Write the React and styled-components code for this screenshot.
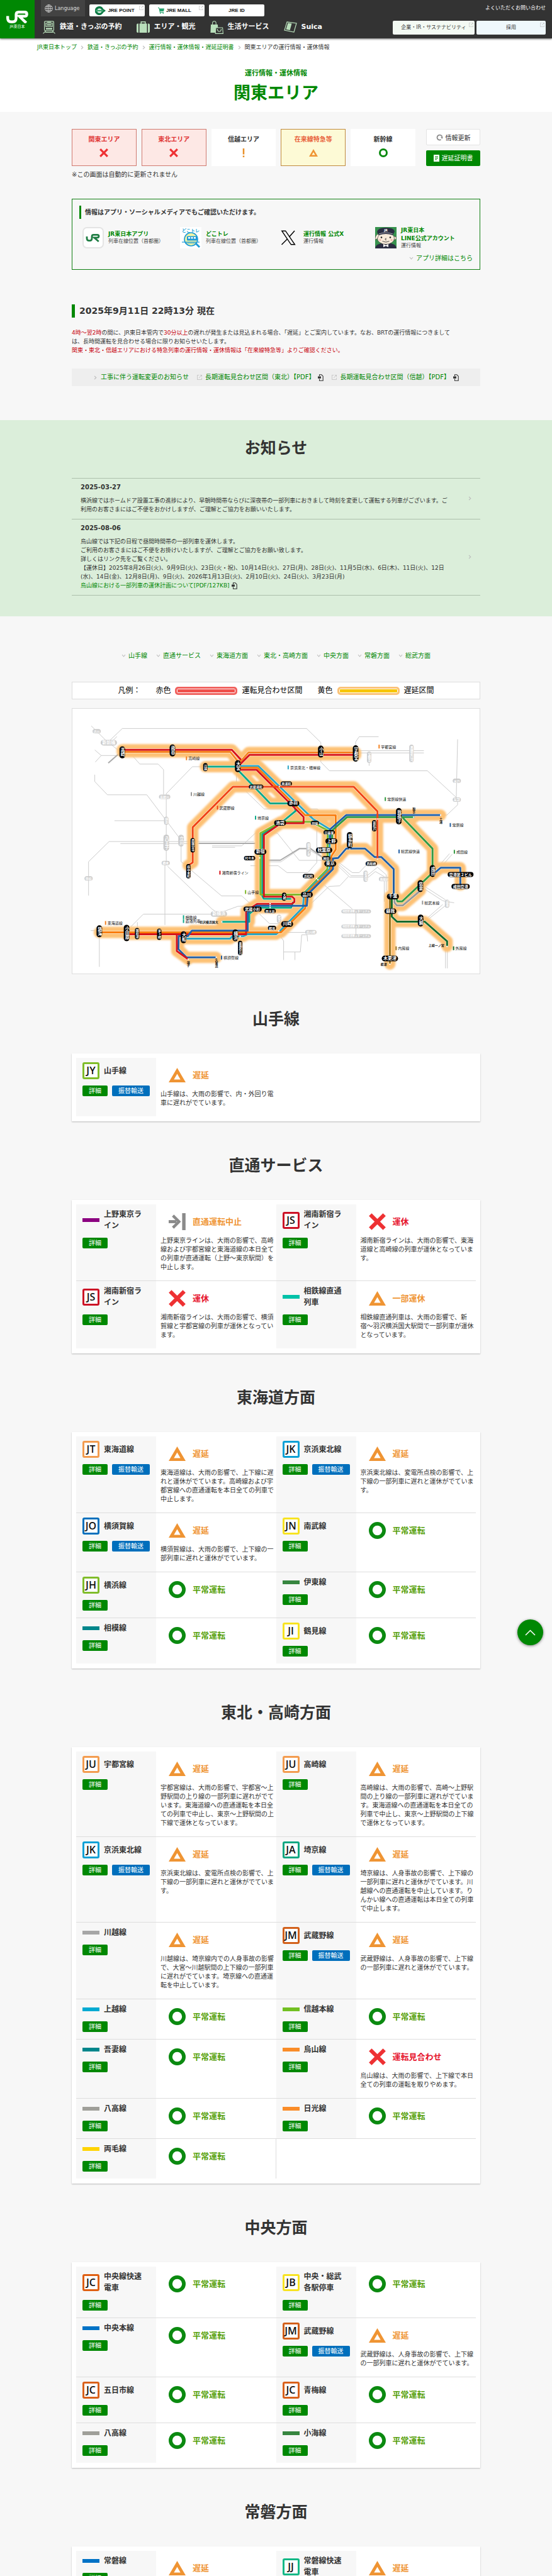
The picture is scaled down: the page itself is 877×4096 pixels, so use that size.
import React from "react";
import styled, { createGlobalStyle } from "styled-components";

const GlobalStyle = createGlobalStyle`
  * {
    box-sizing: border-box;
  }
  html {
    scrollbar-width: none;
  }
  body {
    margin: 0;
    background: #f7f7f7;
    color: #333;
    font-family: "DejaVu Sans", "Noto Sans CJK JP", sans-serif;
    font-size: 10px;
    line-height: 14px;
  }
  h1, h2, h3, p, ul, ol {
    margin: 0;
    padding: 0;
  }
  ul, ol {
    list-style: none;
  }
  a {
    color: #008803;
    text-decoration: none;
  }
  button {
    font-family: inherit;
    cursor: pointer;
  }
  svg {
    display: block;
    flex-shrink: 0;
  }
`;

const Page = styled.div`
  position: relative;
`;

const Container = styled.div`
  width: 100%;
  max-width: 649px;
  margin: 0 auto;
`;

/* ---------- header ---------- */

const HeaderBar = styled.header`
  position: relative;
  display: flex;
  height: 61px;
  background: #333;
  box-shadow: 0 1px 3px rgba(0, 0, 0, 0.6);
`;

const Logo = styled.a`
  display: flex;
  flex-direction: column;
  align-items: center;
  width: 55px;
  padding-top: 17px;
  background: #008803;
  color: #fff;
  font-size: 6px;
  line-height: 9px;
`;

const HeaderBody = styled.div`
  flex: 1;
  display: flex;
  justify-content: space-between;
  padding: 0 10px;
`;

const TopLinks = styled.div`
  display: flex;
  gap: 7px;
  height: 26px;
`;

const Language = styled.button`
  display: flex;
  align-items: center;
  gap: 3px;
  width: 70px;
  height: 26px;
  padding: 0 6px;
  border: 0;
  background: #434343;
  color: #ddd;
  font-size: 8px;
`;

const BrandLink = styled.a`
  position: relative;
  display: flex;
  align-items: center;
  justify-content: center;
  gap: 3px;
  width: 88px;
  height: 19px;
  margin-top: 7px;
  padding-right: ${({ $ext }) => ($ext ? "7px" : "0")};
  border-radius: 2px;
  background: #fff;
  color: #111;
  font-family: "Liberation Sans", sans-serif;
  font-size: 8px;
  font-weight: 700;
`;

const Corner = styled.span`
  position: absolute;
  top: ${({ $top }) => $top || 2}px;
  right: 2px;
`;

const GlobalNav = styled.nav`
  display: flex;
  gap: 23px;
  margin-top: 6px;
  padding-left: 3px;
`;

const NavItem = styled.a`
  display: flex;
  align-items: center;
  gap: 7px;
  color: #fff;
  font-size: 11px;
  font-weight: 700;
  line-height: 22px;
`;

const HeaderRight = styled.div`
  display: flex;
  flex-direction: column;
  align-items: flex-end;
  padding-top: 6px;
`;

const SmallLink = styled.a`
  color: #fff;
  font-size: 8px;
  line-height: 14px;
`;

const CorpLinks = styled.div`
  display: flex;
  gap: 3px;
  margin-top: 13px;
`;

const CorpLink = styled.a`
  position: relative;
  width: ${({ $w }) => $w}px;
  border-radius: 2px;
  background: ${({ $bg }) => $bg};
  color: #333;
  font-size: 8px;
  line-height: 22px;
  text-align: center;
`;

/* ---------- hero ---------- */

const Hero = styled.div`
  padding: 8px 0 12px;
  background: #fff;
  text-align: center;
`;

const Breadcrumb = styled.ol`
  display: flex;
  gap: 5px;
  padding-left: 59px;
  font-size: 9px;
  line-height: 13px;

  li {
    display: flex;
    align-items: center;
    gap: 5px;
  }
`;

const HeroSub = styled.p`
  margin-top: 27px;
  color: #008803;
  font-size: 11px;
  font-weight: 700;
  line-height: 16px;
`;

const HeroTitle = styled.h1`
  margin-top: 5px;
  color: #008803;
  font-size: 27px;
  line-height: 36px;
`;

/* ---------- area tabs ---------- */

const TabRow = styled.div`
  display: flex;
  gap: 17px;
  margin-top: 27px;
`;

const Tabs = styled.nav`
  flex: 1;
  display: grid;
  grid-template-columns: repeat(5, 1fr);
  gap: 8px;
`;

const tabColors = {
  stop: "background: #fde8e5; border-color: #d07a70; color: #e03232;",
  delay: "background: #fdfad6; border-color: #c08a3e; color: #e8603a;",
  plain: "background: #fff; border-color: #fff; color: #333;",
};

const Tab = styled.a`
  display: flex;
  flex-direction: column;
  align-items: center;
  gap: 7px;
  height: 59px;
  padding-top: 9px;
  border: 1px solid;
  font-size: 10px;
  font-weight: 700;
  ${({ $kind }) => tabColors[$kind]}
`;

const TabActions = styled.div`
  display: flex;
  flex-direction: column;
  justify-content: space-between;
  width: 86px;
`;

const RefreshButton = styled.button`
  display: flex;
  align-items: center;
  justify-content: center;
  gap: 4px;
  height: 26px;
  padding: 0;
  border: 1px solid #e3e3e3;
  border-radius: 2px;
  background: #fff;
  color: #333;
  font-size: 10px;
`;

const CertLink = styled.a`
  display: flex;
  align-items: center;
  justify-content: center;
  gap: 4px;
  height: 25px;
  border-radius: 2px;
  background: #008803;
  color: #fff;
`;

const TabNote = styled.p`
  margin-top: 6px;
  line-height: 15px;
`;

/* ---------- app box ---------- */

const AppBox = styled.section`
  margin-top: 31px;
  padding: 10px 11px;
  border: 1px solid #0f7f12;
`;

const BarHeading = styled.h2`
  padding-left: ${({ $wide }) => ($wide ? 7 : 6)}px;
  border-left: ${({ $wide }) => ($wide ? 5 : 3)}px solid #008803;
  font-size: ${({ $wide }) => ($wide ? 14 : 10)}px;
  line-height: 21px;
`;

const AppList = styled.ul`
  display: grid;
  grid-template-columns: repeat(4, 1fr);
  margin-top: 12px;
  padding-left: 5px;
`;

const AppItem = styled.li`
  display: flex;
  align-items: center;
  gap: 7px;
  height: 35px;
  white-space: nowrap;

  a {
    display: block;
    font-size: 9px;
    font-weight: 700;
    line-height: 13px;
  }
  p {
    color: #444;
    font-size: 8px;
    line-height: 10px;
  }
`;

const MoreLink = styled.a`
  display: flex;
  align-items: center;
  justify-content: flex-end;
  gap: 4px;
  margin-top: 8px;
  line-height: 15px;
`;

/* ---------- status time ---------- */

const TimeSection = styled.section`
  margin-top: 55px;
`;

const Lead = styled.p`
  margin-top: 17px;
  font-size: 9px;
`;

const Red = styled.span`
  color: #c7000b;
`;

const LinkStrip = styled.div`
  display: flex;
  align-items: center;
  justify-content: center;
  gap: 13px;
  height: 28px;
  margin-top: 22px;
  background: #eee;

  a {
    display: flex;
    align-items: center;
    gap: 5px;
  }
`;

/* ---------- notice ---------- */

const Notice = styled.section`
  margin-top: 54px;
  padding: 26px 0 33px;
  background: #dbeeda;
`;

const SectionTitle = styled.h2`
  font-size: 25px;
  line-height: 38px;
  text-align: center;
`;

const NoticeList = styled.ul`
  margin-top: 28px;
  border-bottom: 1px solid #adc0ac;
`;

const NoticeItem = styled.li`
  display: flex;
  align-items: center;
  justify-content: space-between;
  padding: 7px 13px 8px 14px;
  border-top: 1px solid #adc0ac;
  font-size: 9px;

  strong {
    display: block;
    margin-bottom: 7px;
    font-size: 10px;
  }
`;

const InlineIcon = styled.span`
  display: inline-block;
  margin-left: 3px;
  vertical-align: middle;
`;

/* ---------- anchors, legend, map ---------- */

const Anchors = styled.nav`
  display: flex;
  justify-content: center;
  gap: 14px;
  margin-top: 55px;
  line-height: 15px;

  a {
    display: flex;
    align-items: center;
    gap: 4px;
  }
`;

const Legend = styled.div`
  display: flex;
  align-items: center;
  justify-content: center;
  height: 28px;
  margin-top: 34px;
  border: 1px solid #ddd;
  background: #fff;
  color: #000;
  font-size: 12px;

  span + span {
    margin-left: 24px;
  }
`;

const LegendKey = styled.span`
  display: flex;
  align-items: center;
  gap: 7px;

  i {
    width: 99px;
    height: 13px;
    border: 3px solid ${({ $edge }) => $edge};
    border-radius: 5px;
    background: ${({ $line }) => $line};
    box-shadow: inset 0 0 0 1px #fff;
  }
`;

const MapFrame = styled.div`
  margin-top: 14px;
  margin-bottom: 53px;
  border: 1px solid #ddd;
  background: #fff;

  svg {
    width: 100%;
    height: auto;
  }
`;

/* ---------- line status ---------- */

const LineSection = styled.section`
  margin-bottom: 52px;
`;

const LineCard = styled.ul`
  display: grid;
  grid-template-columns: 1fr 1fr;
  margin-top: 35px;
  padding: 7px;
  background: #fff;
  box-shadow: 0 1px 2px rgba(0, 0, 0, 0.25);
`;

const LineRow = styled.li`
  display: grid;
  grid-template-columns: 2fr 3fr;
  border-bottom: 1px solid ${({ $last }) => ($last ? "transparent" : "#ddd")};
  ${({ $alone }) => $alone && "box-shadow: inset -1px 0 #ddd;"}
`;

const LineSide = styled.div`
  padding: 7px 0 11px 10px;
  background: #f7f7f7;
`;

const LineHead = styled.div`
  display: flex;
  align-items: center;
  gap: 7px;
  padding-right: 18px;
`;

const LineName = styled.h3`
  font-size: 12px;
  line-height: 18px;
`;

const Badge = styled.span`
  display: flex;
  flex-shrink: 0;
  align-items: center;
  justify-content: center;
  width: 27px;
  height: 27px;
  border: 3px solid ${({ $color }) => $color};
  border-radius: 3px;
  background: #fff;
  color: #111;
  font-family: "Open Sans", sans-serif;
  font-size: 16px;
  font-weight: 600;
  line-height: 21px;
`;

const ColorBar = styled.span`
  flex-shrink: 0;
  width: 27px;
  height: 6px;
  background: ${({ $color }) => $color};
`;

const Buttons = styled.div`
  display: flex;
  gap: 7px;
  margin-top: 10px;
`;

const Pill = styled.a`
  padding: 0 10px;
  border-radius: 2px;
  background: ${({ $alt }) => ($alt ? "#006fbc" : "#008803")};
  color: #fff;
  line-height: 17px;
`;

const LineBody = styled.div`
  padding: 14px 2px 14px 7px;
`;

const StatusHead = styled.div`
  display: flex;
  align-items: center;
  gap: 11px;
  padding-left: 13px;
  color: ${({ $color }) => $color};
  font-size: 13px;
  font-weight: 700;
  line-height: 27px;
`;

const Detail = styled.p`
  margin-top: 10px;
`;

const ToTop = styled.button`
  position: absolute;
  top: 2575px;
  right: 14px;
  display: flex;
  align-items: center;
  justify-content: center;
  width: 41px;
  height: 41px;
  border: 0;
  border-radius: 50%;
  background: #008803;
  box-shadow: 0 1px 4px rgba(0, 0, 0, 0.5);
`;

/* ---------- icons ---------- */

const Chevron = ({ dir = "right", color = "#bbb" }) => (
  <svg width="7" height="7" viewBox="0 0 7 7" fill="none" stroke={color} strokeWidth="1.1">
    <path d={dir === "down" ? "M1 2 L3.5 5 L6 2" : "M2 0.8 L4.8 3.5 L2 6.2"} />
  </svg>
);

const External = ({ size = 8 }) => (
  <svg width={size} height={size} viewBox="0 0 10 10" fill="none" stroke="#bbb" strokeWidth="1">
    <path d="M4 0.5 H0.5 V9.5 H9.5 V6 M6 0.5 H9.5 V4 M9.5 0.5 L4 6" />
  </svg>
);

const PdfIcon = () => (
  <svg width="9" height="11" viewBox="0 0 9 11" fill="none" stroke="#333" strokeWidth="1.1">
    <path d="M2.5 3 V0.8 H5.8 L8.2 3.2 V10.2 H2.5 V7.6" />
    <path d="M0.6 4 H4.4 V6.2 H0.6 Z" fill="#333" />
  </svg>
);

const statusIcons = {
  ok: (
    <circle cx="14" cy="14" r="11" fill="none" stroke="#0b8a10" strokeWidth="6" />
  ),
  delay: (
    <path fillRule="evenodd" fill="#ef9433" d="M14 2 L28 26 H0 Z M14 12 L8.6 21.2 H19.4 Z" />
  ),
  stop: <path stroke="#ee3133" strokeWidth="6.4" d="M2.4 2.4 L25.6 25.6 M25.6 2.4 L2.4 25.6" />,
  through: (
    <g fill="none" stroke="#8a8a8a">
      <path strokeWidth="5" d="M0 14 H13" />
      <path strokeWidth="4.6" d="M7 4 L17 14 L7 24" />
      <path strokeWidth="5.6" d="M25 0 V28" />
    </g>
  ),
  info: <path stroke="#e8902a" strokeWidth="5" d="M14 0 V19 M14 23 V28" />,
};

const StatusIcon = ({ kind, size = 27 }) => (
  <svg width={size} height={size} viewBox="0 0 28 28">
    {statusIcons[kind]}
  </svg>
);

const JrMark = ({ width, color }) => (
  <svg width={width} height={(width * 20) / 35} viewBox="0 0 35 20" fill="none" stroke={color} strokeWidth="4.4">
    <path d="M2.2 8.5 V12 Q2.2 17.7 8 17.7 H10 Q15.6 17.7 15.6 12 V6 Q15.6 2.2 19.6 2.2 H29 Q32.6 2.2 32.6 5.4 Q32.6 8.8 29 8.8 H20.6 L31.6 19.4" />
  </svg>
);

const GlobeIcon = () => (
  <svg width="13" height="13" viewBox="0 0 14 14" fill="none" stroke="#ddd" strokeWidth="0.8">
    <circle cx="7" cy="7" r="6.3" />
    <ellipse cx="7" cy="7" rx="3" ry="6.3" />
    <path d="M7 0.7 V13.3 M0.7 7 H13.3 M1.6 3.8 H12.4 M1.6 10.2 H12.4" />
  </svg>
);

const PointIcon = () => (
  <svg width="17" height="14" viewBox="0 0 17 14">
    <path fill="#0d7a45" d="M7 0 A7 7 0 0 1 13 4 L17 7 L13 10 A7 7 0 1 1 7 0 Z" />
    <circle cx="7" cy="7" r="3.6" fill="#fff" />
    <path fill="#3ea56f" d="M1 5.6 H13 V8.4 H1 Z" />
  </svg>
);

const CartIcon = () => (
  <svg width="10" height="10" viewBox="0 0 10 10">
    <path fill="#22a06b" d="M0 0 H2 L2.4 1.4 H10 L9 6 H3.4 L3.6 7 H9 V8 H2.8 L1.4 1 H0 Z" />
    <circle cx="3.8" cy="9.1" r="0.9" fill="#22a06b" />
    <circle cx="8.2" cy="9.1" r="0.9" fill="#22a06b" />
  </svg>
);

const TrainIcon = () => (
  <svg width="20" height="21" viewBox="0 0 20 21" fill="none" stroke="#b9dfbb" strokeWidth="1.2">
    <rect x="2.6" y="0.8" width="14.8" height="15" rx="1.5" />
    <rect x="4.8" y="3.8" width="10.4" height="5.4" />
    <path d="M7 2.2 H13" />
    <path fill="#b9dfbb" d="M5 11.5 H15 V14 H5 Z M6.4 5.4 H13.6 V7.6 H6.4 Z" stroke="none" />
    <path d="M5 16 L0.5 20.4 M15 16 L19.5 20.4 M4 18.4 H16" />
  </svg>
);

const CaseIcon = () => (
  <svg width="21" height="18" viewBox="0 0 21 18" fill="#b9dfbb">
    <path d="M2 3.5 H3 V18 H2 Q0 18 0 16 V5.5 Q0 3.5 2 3.5 Z M19 3.5 H18 V18 H19 Q21 18 21 16 V5.5 Q21 3.5 19 3.5 Z" />
    <path d="M4.5 3.5 H6.5 V0 H14.5 V3.5 H16.5 V18 H4.5 Z M8 1.4 V3.5 H13 V1.4 Z" fillRule="evenodd" />
  </svg>
);

const BagIcon = () => (
  <svg width="21" height="21" viewBox="0 0 21 21" fill="none" stroke="#b9dfbb" strokeWidth="1.1">
    <path d="M1 6 H12 L12.6 19 H0.4 Z" fill="#b9dfbb" stroke="none" />
    <path d="M3.6 7.5 V4 Q3.6 0.8 6.4 0.8 Q9.2 0.8 9.2 4 V7.5" />
    <path d="M9 11 H19.6 L20.4 20.4 H8.2 Z" fill="#333" />
    <path d="M11.4 13 Q11.4 17 14.4 17 Q17.4 17 17.4 13" />
  </svg>
);

const SuicaIcon = () => (
  <svg width="21" height="18" viewBox="0 0 21 18" fill="none" stroke="#b9dfbb" strokeWidth="1.2">
    <path d="M5 0.8 L20 3 L16 17 L1 14 Z" />
    <path fill="#b9dfbb" d="M6.5 2.6 L12.5 3.4 L9.6 14 L3.4 12.8 Z" stroke="none" />
  </svg>
);

const ReloadIcon = () => (
  <svg width="11" height="11" viewBox="0 0 11 11" fill="none" stroke="#8c8c8c" strokeWidth="1.8">
    <path d="M7.6 9 A4 4 0 1 1 9.4 4.6" />
    <path d="M7 4.8 H11 L9.4 8 Z" fill="#8c8c8c" stroke="none" />
  </svg>
);

const DocIcon = () => (
  <svg width="9" height="11" viewBox="0 0 9 11">
    <rect width="9" height="11" fill="#fff" />
    <path d="M2 3 H7 M2 5.4 H7 M2 7.8 H5" stroke="#008803" />
  </svg>
);

const JrAppIcon = () => (
  <svg width="34" height="34" viewBox="0 0 34 34">
    <rect x="1" y="1" width="32" height="32" rx="6" fill="#fff" stroke="#e4e4e4" strokeWidth="2" />
    <g fill="none" stroke="#1f7d43" strokeWidth="2.8">
      <path d="M7 15 V18 Q7 21.6 10.6 21.6 H11.6 Q15 21.6 15 18 V15 Q15 12.4 17.6 12.4 H23.6 Q26 12.4 26 14.6 Q26 16.8 23.6 16.8 H18.6 L25.8 23" />
    </g>
  </svg>
);

const DokotoreIcon = () => (
  <svg width="34" height="34" viewBox="0 0 34 34">
    <rect width="34" height="34" fill="#fff" />
    <path d="M25 26 L31 32" stroke="#1e9bd7" strokeWidth="3" />
    <circle cx="17.5" cy="19.5" r="10.5" fill="#eef3a6" stroke="#1e9bd7" strokeWidth="1.6" />
    <rect x="11" y="14.5" width="17" height="7" rx="1" fill="#1e9bd7" />
    <path d="M13 16 H16 V18.5 H13 Z M17.5 16 H20.5 V18.5 H17.5 Z M22 16 H25 V18.5 H22 Z" fill="#fff" />
    <path d="M3 24 H31" stroke="#1e9bd7" strokeWidth="1.2" />
    <path d="M8 25.5 H27" stroke="#1e9bd7" strokeWidth="1.6" strokeDasharray="1.5 1" />
    <text x="17" y="8" textAnchor="middle" fontSize="7" fontWeight="700" fill="#2aa7d8">どこトレ</text>
  </svg>
);

const XIcon = () => (
  <svg width="34" height="34" viewBox="0 0 34 34" fill="none" stroke="#000">
    <path strokeWidth="1.5" d="M27 6 L18.5 15.7 M15.5 19 L6.5 28" />
    <path strokeWidth="1.4" d="M6.8 6.2 H12.6 L27.4 27.8 H21.4 Z" fill="#f7f7f7" />
  </svg>
);

const OfficerIcon = () => (
  <svg width="34" height="34" viewBox="0 0 34 34">
    <rect width="34" height="34" fill="#37924e" />
    <path d="M0 34 Q1 27 10 26 H25 Q33 27 34 34 Z" fill="#2b2d42" />
    <circle cx="31" cy="17.5" r="2.6" fill="#f7e6d4" stroke="#222" strokeWidth="0.5" />
    <ellipse cx="17" cy="18" rx="13.5" ry="9.5" fill="#f9ecdc" stroke="#222" strokeWidth="0.6" />
    <path d="M0 20 Q0 13 5 11 L6 13 L3 19 Z" fill="#f9ecdc" stroke="#222" strokeWidth="0.5" />
    <path d="M3 8 Q4 1 17 1 Q30 1 31 7 L28 13 Q17 9 6 13 Z" fill="#2b2d42" />
    <path d="M6 11 Q17 7 28 11" stroke="#ddd" strokeWidth="0.7" fill="none" />
    <text x="17" y="6.5" textAnchor="middle" fontSize="5" fontWeight="700" fill="#fff">JR</text>
    <circle cx="10" cy="16.5" r="1.3" fill="#222" />
    <circle cx="24" cy="16.5" r="1.3" fill="#222" />
    <circle cx="8" cy="20.5" r="1.6" fill="#f3b8ac" />
    <circle cx="26" cy="20.5" r="1.6" fill="#f3b8ac" />
    <path d="M18 18 Q15.5 18 16 20 Q16.5 21 18 20.5 M11.5 22.5 Q17 25.5 22.5 22.5" fill="none" stroke="#222" strokeWidth="0.8" />
    <path d="M13 27 L17 29 L21 27 V32 L17 30 L13 32 Z" fill="#fff" />
  </svg>
);

/* ---------- route map ---------- */

// Tracks and stations share one grid, which is wider than it is tall.
const SX = 0.4286;
const SY = 0.2961;
const px = (x) => (x - 27) * SX;
const py = (y) => (y - 44) * SY;

const greyTracks = [
  "97,136 152,215 200,270",
  "165,215 212,150 895,150 948,225 948,330 980,377 1343,377 1450,520 1455,208",
  "170,225 192,193",
  "1455,540 1455,560 1415,615 1400,615",
  "1077,240 1077,222 1090,194 1162,194",
  "1085,269 1330,269",
  "1085,281 1330,281",
  "1127,290 1127,350",
  "110,265 134,295 205,295",
  "134,295 112,330",
  "252,300 277,341 345,341 365,371 365,505",
  "515,355 472,355 375,500 375,860 370,870 370,1205",
  "110,398 110,435 157,506 303,506 430,750 430,865 580,1049 655,1049 690,1095",
  "183,645 370,645",
  "87,1047 87,865 163,757 700,757",
  "205,768 700,768",
  "380,890 545,1120 570,1145",
  "545,780 655,780 705,712 787,712 868,858 955,858",
  "545,788 630,788",
  "635,370 635,440",
  "670,487 738,582 935,582 942,592",
  "687,887 790,887 823,924 900,924 933,870 933,690",
  "748,866 800,866 870,797 900,797 960,850",
  "1015,870 1065,924 1090,924 1125,870",
  "1015,880 1060,940 1120,940 1158,895 1190,935 1190,1020",
  "1010,885 1055,948 1125,948 1150,918 1183,945 1183,1080",
  "962,992 1065,1120",
  "1078,1130 1078,1265",
  "1050,945 1018,995 978,998 912,1090",
  "1435,825 1405,875",
  "1425,822 1395,872",
  "1325,1005 1400,1075 1442,1086",
  "1335,1000 1410,1070",
  "1415,1095 1350,1170",
  "1400,1095 1345,1165",
  "1410,1330 1410,1438",
  "1417,1330 1417,1438",
  "127,1260 127,1430",
  "95,1235 120,1235",
  "240,1220 290,1147 560,1147 640,1105 700,1102",
  "268,1190 268,1230",
  "720,1145 758,1198 800,1198",
  "800,1270 810,1290 810,1393",
  "810,1350 872,1350 877,1258 897,1258 899,1293",
  "852,1350 852,1393",
  "825,1245 890,1245",
];

const heavyTracks = ["200,285 160,335", "495,767 705,767", "748,857 798,857 868,795 910,795 955,842"];

const tracks = [
  ["#f58220", "212,275 612,275 645,335"],
  ["#d7141a", "212,264 618,264 652,318 640,345"],
  ["#f58220", "1077,279 680,279 645,335"],
  ["#d7141a", "1077,291 684,291 640,355"],
  ["#0fa98a", "520,355 640,355"],
  ["#0fa98a", "640,372 760,552 845,552 855,592 808,648 731,717 731,1050 736,1064 838,1065"],
  ["#0fa98a", "846,1080 838,1112 710,1112 683,1145 683,1188 580,1188"],
  ["#7fb82a", "800,651 912,651 973,697 972,905 880,1042 724,1042 724,712 800,651"],
  ["#2ca6c4", "640,351 716,351 920,637 980,690 981,905 885,1040 882,1110 795,1240 782,1255 675,1255 660,1266 620,1266 612,1278 445,1278"],
  ["#f97c0c", "640,361 713,361 890,616 1003,616 1003,800 987,835 987,905 892,1040 890,1115 800,1245 127,1245"],
  ["#d7141a", "640,372 710,372 884,625 884,659 800,659 737,722 737,1053 842,1053 850,1065 850,1082 840,1092 712,1092 671,1130 671,1255 228,1255"],
  ["#2360a5", "1218,1050 1218,905 1172,840 1147,840 1112,795 1042,795 1012,845 993,848 993,905 900,1040 896,1102 710,1102 677,1140 677,1235 470,1235 455,1265 421,1265 420,1335 450,1379 560,1379"],
  ["#d7141a", "414,1255 414,1345 456,1389"],
  ["#339a42", "1295,626 1045,626 990,697 990,750"],
  ["#2360a5", "1392,615 1042,615 983,690 983,750"],
  ["#339a42", "1252,630 1362,795 1362,925 1250,1078 1232,1078 1225,1050"],
  ["#999", "1317,1020 1252,1100 1230,1100 1221,1085 1221,1050"],
  ["#2360a5", "1362,935 1392,898 1465,898 1465,990"],
  ["#f04414", "456,885 473,870 473,680 622,463 1070,463 1158,595 1158,850"],
  ["#9a7420", "1204,1050 1204,1415"],
  ["#166b2c", "1211,1050 1211,1160 1230,1187 1333,1187 1416,1292 1416,1320"],
];

// name, x, y, kind: H and V are major stations, h and v minor ones
const stations = [
  ["高崎", 212, 278, "V"], ["熊谷", 398, 268, "V"], ["小山", 948, 274, "V"], ["宇都宮", 1077, 284, "V"],
  ["川越", 520, 357, "v"], ["大宮", 640, 352, "V"], ["南浦和", 820, 446, "h"], ["武蔵浦和", 708, 463, "h"],
  ["赤羽", 846, 552, "H"], ["池袋", 797, 657, "H"], ["田端", 926, 657, "h"], ["日暮里", 979, 708, "h"],
  ["上野", 987, 755, "H"], ["秋葉原", 960, 803, "H"], ["神田", 968, 847, "h"], ["東京", 983, 876, "H"],
  ["錦糸町", 1055, 750, "V"], ["新松戸", 1146, 672, "v"], ["我孫子", 1237, 621, "V"], ["西船橋", 1135, 876, "h"],
  ["新宿", 724, 812, "H"], ["代々木", 684, 846, "h"], ["浜松町", 902, 942, "h"], ["品川", 896, 1042, "H"],
  ["大崎", 812, 1053, "v"], ["武蔵小杉", 695, 1120, "H"], ["西大井", 760, 1130, "h"], ["川崎", 823, 1200, "H"],
  ["鶴見", 767, 1221, "h"], ["横浜", 631, 1261, "V"], ["東神奈川", 649, 1328, "v"], ["大船", 439, 1271, "V"],
  ["茅ヶ崎", 349, 1255, "v"], ["国府津", 267, 1251, "v"], ["小田原", 228, 1248, "V"], ["熱海", 127, 1239, "V"],
  ["西国分寺", 473, 777, "v"], ["府中本町", 457, 916, "v"], ["成田", 1362, 915, "V"], ["佐倉", 1317, 996, "V"],
  ["空港第２ビル", 1466, 934, "H"], ["成田空港", 1466, 998, "H"], ["千葉", 1215, 1052, "H"], ["蘇我", 1206, 1131, "H"],
  ["大網", 1318, 1181, "V"], ["木更津", 1204, 1385, "H"],
];

const greyStations = [
  ["渋川", 117, 165, "h"], ["新前橋", 162, 226, "H"], ["宝積寺", 1127, 304, "v"], ["黒磯新白河", 1284, 284, "v"],
  ["水戸", 1452, 431, "h"], ["友部", 1452, 532, "h"], ["高麗川", 369, 517, "h"], ["拝島", 375, 645, "v"],
  ["八王子", 375, 763, "V"], ["立川", 430, 752, "V"], ["橋本", 373, 872, "h"], ["甲府", 87, 955, "h"],
  ["新横浜", 570, 1146, "H"], ["御茶ノ水", 902, 799, "v"], ["新木場", 1114, 943, "v"], ["南船橋", 1184, 958, "h"],
  ["成東", 1416, 1091, "v"], ["尻手", 793, 1172, "v"], ["浜川崎", 911, 1244, "h"],
  ["羽田空港第１ターミナル", 1079, 1132, "h"], ["羽田空港第３ターミナル", 1079, 1213, "h"], ["羽田空港第２ターミナル", 1079, 1265, "h"],
];

const lineLabels = [
  ["宇都宮線", 1164, 247, "#f58220"], ["高崎線", 450, 310, "#f58220"], ["京浜東北・根岸線", 827, 359, "#2ca6c4"],
  ["川越線", 468, 502, "#999"], ["武蔵野線", 565, 575, "#f04414"], ["埼京線", 706, 629, "#0fa98a"],
  ["常磐線快速", 1187, 529, "#339a42"], ["常磐線", 1428, 668, "#2360a5"], ["総武線快速", 1238, 810, "#2360a5"],
  ["成田線", 1443, 812, "#339a42"], ["湘南新宿ライン", 574, 924, "#d7141a"], ["山手線", 669, 1028, "#7fb82a"],
  ["総武本線", 1325, 1085, "#999"], ["相鉄線", 439, 1163, "#0fa98a"], ["直通列車", 439, 1184, "#0fa98a"],
  ["東海道線", 150, 1194, "#f58220"], ["横須賀線", 580, 1380, "#2360a5"], ["内房線", 1227, 1330, "#9a7420"],
  ["外房線", 1440, 1330, "#166b2c"],
];

const plainLabels = [
  ["羽沢横浜国大", 533, 1189], ["逗子", 456, 1413, "v"], ["久里浜", 560, 1410, "v"], ["取手", 1292, 590, "v"],
  ["土浦", 1392, 643, "v"], ["上総一ノ宮", 1376, 1314], ["君津", 1181, 1415],
];

const stops = [
  [794, 462], [1392, 615], [1292, 626], [1158, 636], [1158, 850], [1055, 795], [721, 845], [932, 955], [937, 962],
  [760, 1091], [760, 1102], [760, 1112], [581, 1188], [792, 1238], [649, 1266], [456, 1389], [560, 1379],
  [1204, 1415], [1416, 1320],
];

const Station = ({ name, x, y, kind, fill }) => {
  const major = kind === "H" || kind === "V";
  const vertical = kind === "V" || kind === "v";
  const font = major ? (name.length > 3 ? 6 : 7) : name.length > 6 ? 4 : 5;
  const long = name.length * font + (major ? 5 : 3);
  const thick = font + 2;
  const w = vertical ? thick : long;
  const h = vertical ? long : thick;
  return (
    <g>
      <rect x={px(x) - w / 2} y={py(y) - h / 2} width={w} height={h} rx={thick / 2} fill={fill} />
      <text
        x={px(x)}
        y={py(y)}
        fill="#fff"
        fontSize={font}
        fontWeight="700"
        textAnchor="middle"
        dominantBaseline="central"
        writingMode={vertical ? "vertical-rl" : undefined}
      >
        {name}
      </text>
    </g>
  );
};

const Track = ({ points, color, width }) => (
  <polyline points={points} stroke={color} strokeWidth={width} vectorEffect="non-scaling-stroke" />
);

const RouteMap = () => (
  <svg viewBox="0 0 647 421" role="img" aria-label="関東エリア路線図">
    <defs>
      <filter id="glow" x="-5%" y="-5%" width="110%" height="110%">
        <feGaussianBlur stdDeviation="1.6" />
      </filter>
    </defs>
    <g fill="none" strokeLinejoin="round">
      <g transform={`scale(${SX} ${SY}) translate(-27 -44)`}>
        {greyTracks.map((p) => <Track key={p} points={p} color="#ccc" width="1" />)}
        {heavyTracks.map((p) => <Track key={p} points={p} color="#aaa" width="2" />)}
      </g>
    </g>
    {greyStations.map(([name, x, y, kind]) => (
      <Station key={name} name={name} x={x} y={y} kind={kind} fill="#ccc" />
    ))}
    <g filter="url(#glow)" fill="none" strokeLinejoin="round" strokeLinecap="round">
      <g transform={`scale(${SX} ${SY}) translate(-27 -44)`}>
        {tracks.map(([c, p]) => <Track key={p} points={p} color="#fdc174" width="18" />)}
      </g>
    </g>
    <g fill="none" strokeLinejoin="round">
      <g transform={`scale(${SX} ${SY}) translate(-27 -44)`}>
        {tracks.map(([c, p]) => <Track key={p} points={p} color="#fff" width="4" />)}
        {tracks.map(([c, p]) => <Track key={p} points={p} color={c} width="3" />)}
      </g>
    </g>
    {stops.map(([x, y]) => (
      <rect key={`${x}-${y}`} x={px(x) - 1} y={py(y) - 1} width="2" height="2" fill="#fff" />
    ))}
    {stations.map(([name, x, y, kind]) => (
      <Station key={name} name={name} x={x} y={y} kind={kind} fill="#000" />
    ))}
    {lineLabels.map(([name, x, y, color]) => (
      <g key={name}>
        <rect x={px(x) - 1} y={py(y) - 3} width="2" height="6" fill={color} />
        <text x={px(x) + 3} y={py(y)} fontSize="6" fill="#111" dominantBaseline="central">{name}</text>
      </g>
    ))}
    {plainLabels.map(([name, x, y, v]) => (
      <text
        key={name}
        x={px(x)}
        y={py(y)}
        fontSize="5"
        fontWeight="700"
        fill="#111"
        textAnchor="middle"
        dominantBaseline="central"
        writingMode={v ? "vertical-rl" : undefined}
      >
        {name}
      </text>
    ))}
  </svg>
);

/* ---------- data ---------- */

const DELAY = { kind: "delay", label: "遅延", color: "#ef9433" };
const PARTIAL = { kind: "delay", label: "一部運休", color: "#ef9433" };
const THROUGH = { kind: "through", label: "直通運転中止", color: "#ef9433" };
const CANCEL = { kind: "stop", label: "運休", color: "#e6142d" };
const HALT = { kind: "stop", label: "運転見合わせ", color: "#e6142d" };
const NORMAL = { kind: "ok", label: "平常運転", color: "#56a00b" };

const areas = [
  {
    title: "山手線",
    lines: [
      { name: "山手線", code: "JY", color: "#80bd2a", alt: true, status: DELAY, text: "山手線は、大雨の影響で、内・外回り電車に遅れがでています。" },
    ],
  },
  {
    title: "直通サービス",
    lines: [
      { name: "上野東京ライン", color: "#8b0080", status: THROUGH, text: "上野東京ラインは、大雨の影響で、高崎線および宇都宮線と東海道線の本日全ての列車が直通運転（上野〜東京駅間）を中止します。" },
      { name: "湘南新宿ライン", code: "JS", color: "#cc1126", status: CANCEL, text: "湘南新宿ラインは、大雨の影響で、東海道線と高崎線の列車が運休となっています。" },
      { name: "湘南新宿ライン", code: "JS", color: "#cc1126", status: CANCEL, text: "湘南新宿ラインは、大雨の影響で、横須賀線と宇都宮線の列車が運休となっています。" },
      { name: "相鉄線直通列車", color: "#00c2a8", status: PARTIAL, text: "相鉄線直通列車は、大雨の影響で、新宿〜羽沢横浜国大駅間で一部列車が運休となっています。" },
    ],
  },
  {
    title: "東海道方面",
    lines: [
      { name: "東海道線", code: "JT", color: "#f39c4f", alt: true, status: DELAY, text: "東海道線は、大雨の影響で、上下線に遅れと運休がでています。高崎線および宇都宮線への直通運転を本日全ての列車で中止します。" },
      { name: "京浜東北線", code: "JK", color: "#0ba1d6", alt: true, status: DELAY, text: "京浜東北線は、変電所点検の影響で、上下線の一部列車に遅れと運休がでています。" },
      { name: "横須賀線", code: "JO", color: "#0070bd", alt: true, status: DELAY, text: "横須賀線は、大雨の影響で、上下線の一部列車に遅れと運休がでています。" },
      { name: "南武線", code: "JN", color: "#f7e321", status: NORMAL },
      { name: "横浜線", code: "JH", color: "#80bd2a", status: NORMAL },
      { name: "伊東線", color: "#378640", status: NORMAL },
      { name: "相模線", color: "#00868b", status: NORMAL },
      { name: "鶴見線", code: "JI", color: "#f7e321", status: NORMAL },
    ],
  },
  {
    title: "東北・高崎方面",
    lines: [
      { name: "宇都宮線", code: "JU", color: "#f39c4f", status: DELAY, text: "宇都宮線は、大雨の影響で、宇都宮〜上野駅間の上り線の一部列車に遅れがでています。東海道線への直通運転を本日全ての列車で中止し、東京〜上野駅間の上下線で運休となっています。" },
      { name: "高崎線", code: "JU", color: "#f39c4f", status: DELAY, text: "高崎線は、大雨の影響で、高崎〜上野駅間の上り線の一部列車に遅れがでています。東海道線への直通運転を本日全ての列車で中止し、東京〜上野駅間の上下線で運休となっています。" },
      { name: "京浜東北線", code: "JK", color: "#0ba1d6", alt: true, status: DELAY, text: "京浜東北線は、変電所点検の影響で、上下線の一部列車に遅れと運休がでています。" },
      { name: "埼京線", code: "JA", color: "#0ba782", alt: true, status: DELAY, text: "埼京線は、人身事故の影響で、上下線の一部列車に遅れと運休がでています。川越線への直通運転を中止しています。りんかい線への直通運転は本日全ての列車で中止します。" },
      { name: "川越線", color: "#a6a6a6", status: DELAY, text: "川越線は、埼京線内での人身事故の影響で、大宮〜川越駅間の上下線の一部列車に遅れがでています。埼京線への直通運転を中止しています。" },
      { name: "武蔵野線", code: "JM", color: "#d2601a", alt: true, status: DELAY, text: "武蔵野線は、人身事故の影響で、上下線の一部列車に遅れと運休がでています。" },
      { name: "上越線", color: "#00aad2", status: NORMAL },
      { name: "信越本線", color: "#72c022", status: NORMAL },
      { name: "吾妻線", color: "#00868b", status: NORMAL },
      { name: "烏山線", color: "#fa8c28", status: HALT, text: "烏山線は、大雨の影響で、上下線で本日全ての列車の運転を取りやめます。" },
      { name: "八高線", color: "#9f9f99", status: NORMAL },
      { name: "日光線", color: "#fa8c28", status: NORMAL },
      { name: "両毛線", color: "#ffd400", status: NORMAL },
    ],
  },
  {
    title: "中央方面",
    lines: [
      { name: "中央線快速電車", code: "JC", color: "#df5f12", status: NORMAL },
      { name: "中央・総武各駅停車", code: "JB", color: "#f7e321", status: NORMAL },
      { name: "中央本線", color: "#0072c6", status: NORMAL },
      { name: "武蔵野線", code: "JM", color: "#d2601a", alt: true, status: DELAY, text: "武蔵野線は、人身事故の影響で、上下線の一部列車に遅れと運休がでています。" },
      { name: "五日市線", code: "JC", color: "#d9611b", status: NORMAL },
      { name: "青梅線", code: "JC", color: "#d9611b", status: NORMAL },
      { name: "八高線", color: "#9f9f99", status: NORMAL },
      { name: "小海線", color: "#378640", status: NORMAL },
    ],
  },
  {
    title: "常磐方面",
    lines: [
      { name: "常磐線", color: "#0072c6", status: DELAY },
      { name: "常磐線快速電車", code: "JJ", color: "#12b886", status: DELAY },
    ],
  },
];

const areaTabs = [
  ["関東エリア", "stop", "stop"],
  ["東北エリア", "stop", "stop"],
  ["信越エリア", "plain", "info"],
  ["在来線特急等", "delay", "delay"],
  ["新幹線", "plain", "ok"],
];

const anchors = ["山手線", "直通サービス", "東海道方面", "東北・高崎方面", "中央方面", "常磐方面", "総武方面"];

/* ---------- page parts ---------- */

const Header = () => (
  <HeaderBar>
    <Logo href="#">
      <JrMark width={35} color="#fff" />
      <span>JR東日本</span>
    </Logo>
    <HeaderBody>
      <div>
        <TopLinks>
          <Language type="button"><GlobeIcon />Language</Language>
          <BrandLink href="#" $ext><PointIcon />JRE POINT<Corner><External size={7} /></Corner></BrandLink>
          <BrandLink href="#" $ext><CartIcon />JRE MALL<Corner><External size={7} /></Corner></BrandLink>
          <BrandLink href="#">JRE ID</BrandLink>
        </TopLinks>
        <GlobalNav>
          <NavItem href="#"><TrainIcon />鉄道・きっぷの予約</NavItem>
          <NavItem href="#"><CaseIcon />エリア・観光</NavItem>
          <NavItem href="#"><BagIcon />生活サービス</NavItem>
          <NavItem href="#"><SuicaIcon />Suica</NavItem>
        </GlobalNav>
      </div>
      <HeaderRight>
        <SmallLink href="#">よくいただくお問い合わせ</SmallLink>
        <CorpLinks>
          <CorpLink href="#" $w={130} $bg="#f3faf3">企業・IR・サステナビリティ<Corner $top={3}><External size={7} /></Corner></CorpLink>
          <CorpLink href="#" $w={110} $bg="#eff8fc">採用<Corner $top={3}><External size={7} /></Corner></CorpLink>
        </CorpLinks>
      </HeaderRight>
    </HeaderBody>
  </HeaderBar>
);

const LineEntry = ({ line, last, alone }) => (
  <LineRow $last={last} $alone={alone}>
    <LineSide>
      <LineHead>
        {line.code ? <Badge $color={line.color}>{line.code}</Badge> : <ColorBar $color={line.color} />}
        <LineName>{line.name}</LineName>
      </LineHead>
      <Buttons>
        <Pill href="#">詳細</Pill>
        {line.alt && <Pill href="#" $alt>振替輸送</Pill>}
      </Buttons>
    </LineSide>
    <LineBody>
      <StatusHead $color={line.status.color}>
        <StatusIcon kind={line.status.kind} />
        {line.status.label}
      </StatusHead>
      {line.text && <Detail>{line.text}</Detail>}
    </LineBody>
  </LineRow>
);

const AreaBlock = ({ title, lines }) => {
  const lastRow = Math.floor((lines.length - 1) / 2);
  return (
    <LineSection id={title}>
      <SectionTitle>{title}</SectionTitle>
      <LineCard>
        {lines.map((line, i) => (
          <LineEntry
            key={i}
            line={line}
            last={Math.floor(i / 2) === lastRow}
            alone={lines.length > 1 && i === lines.length - 1 && i % 2 === 0}
          />
        ))}
      </LineCard>
    </LineSection>
  );
};

const App = () => {
  return (
    <Page>
      <GlobalStyle />
      <Header />
      <Hero>
        <Breadcrumb>
          <li><a href="#">JR東日本トップ</a><Chevron /></li>
          <li><a href="#">鉄道・きっぷの予約</a><Chevron /></li>
          <li><a href="#">運行情報・運休情報・遅延証明書</a><Chevron /></li>
          <li>関東エリアの運行情報・運休情報</li>
        </Breadcrumb>
        <HeroSub>運行情報・運休情報</HeroSub>
        <HeroTitle>関東エリア</HeroTitle>
      </Hero>

      <Container>
        <TabRow>
          <Tabs>
            {areaTabs.map(([label, kind, icon]) => (
              <Tab key={label} href="#" $kind={kind}>
                {label}
                <StatusIcon kind={icon} size={14} />
              </Tab>
            ))}
          </Tabs>
          <TabActions>
            <RefreshButton type="button"><ReloadIcon />情報更新</RefreshButton>
            <CertLink href="#"><DocIcon />遅延証明書</CertLink>
          </TabActions>
        </TabRow>
        <TabNote>※この画面は自動的に更新されません</TabNote>

        <AppBox>
          <BarHeading>情報はアプリ・ソーシャルメディアでもご確認いただけます。</BarHeading>
          <AppList>
            <AppItem><JrAppIcon /><div><a href="#">JR東日本アプリ</a><p>列車在線位置（首都圏）</p></div></AppItem>
            <AppItem><DokotoreIcon /><div><a href="#">どこトレ</a><p>列車在線位置（首都圏）</p></div></AppItem>
            <AppItem><XIcon /><div><a href="#">運行情報 公式X</a><p>運行情報</p></div></AppItem>
            <AppItem><OfficerIcon /><div><a href="#">JR東日本<br />LINE公式アカウント</a><p>運行情報</p></div></AppItem>
          </AppList>
          <MoreLink href="#"><Chevron dir="down" />アプリ詳細はこちら</MoreLink>
        </AppBox>

        <TimeSection>
          <BarHeading $wide>2025年9月11日 22時13分 現在</BarHeading>
          <Lead>
            <Red>4時〜翌2時</Red>の間に、JR東日本管内で<Red>30分以上</Red>の遅れが発生または見込まれる場合、「遅延」とご案内しています。なお、BRTの運行情報につきまして<br />
            は、長時間運転を見合わせる場合に限りお知らせいたします。<br />
            <Red>関東・東北・信越エリアにおける特急列車の運行情報・運休情報は「在来線特急等」よりご確認ください。</Red>
          </Lead>
          <LinkStrip>
            <a href="#"><Chevron />工事に伴う運転変更のお知らせ</a>
            <a href="#"><External />長期運転見合わせ区間（東北）【PDF】<PdfIcon /></a>
            <a href="#"><External />長期運転見合わせ区間（信越）【PDF】<PdfIcon /></a>
          </LinkStrip>
        </TimeSection>
      </Container>

      <Notice>
        <Container>
          <SectionTitle>お知らせ</SectionTitle>
          <NoticeList>
            <NoticeItem>
              <div>
                <strong>2025-03-27</strong>
                横浜線ではホームドア設置工事の進捗により、早朝時間帯ならびに深夜帯の一部列車におきまして時刻を変更して運転する列車がございます。ご<br />
                利用のお客さまにはご不便をおかけしますが、ご理解とご協力をお願いいたします。
              </div>
              <Chevron />
            </NoticeItem>
            <NoticeItem>
              <div>
                <strong>2025-08-06</strong>
                烏山線では下記の日程で昼間時間帯の一部列車を運休します。<br />
                ご利用のお客さまにはご不便をお掛けいたしますが、ご理解とご協力をお願い致します。<br />
                詳しくはリンク先をご覧ください。<br />
                【運休日】2025年8月26日(火)、9月9日(火)、23日(火・祝)、10月14日(火)、27日(月)、28日(火)、11月5日(水)、6日(木)、11日(火)、12日<br />
                (水)、14日(金)、12月8日(月)、9日(火)、2026年1月13日(火)、2月10日(火)、24日(火)、3月23日(月)<br />
                <a href="#">烏山線における一部列車の運休計画について[PDF/127KB]</a>
                <InlineIcon><PdfIcon /></InlineIcon>
              </div>
              <Chevron />
            </NoticeItem>
          </NoticeList>
        </Container>
      </Notice>

      <Container>
        <Anchors>
          {anchors.map((name) => (
            <a key={name} href={`#${name}`}><Chevron dir="down" />{name}</a>
          ))}
        </Anchors>
        <Legend>
          <span>凡例：</span>
          <LegendKey $edge="#f0625f" $line="#f0504c">赤色<i />運転見合わせ区間</LegendKey>
          <LegendKey $edge="#fbc37a" $line="#f7c600">黄色<i />遅延区間</LegendKey>
        </Legend>
        <MapFrame>
          <RouteMap />
        </MapFrame>
        {areas.map((area) => (
          <AreaBlock key={area.title} {...area} />
        ))}
      </Container>

      <ToTop type="button" aria-label="ページの先頭へ">
        <svg width="17" height="10" viewBox="0 0 17 10" fill="none" stroke="#fff" strokeWidth="1.5">
          <path d="M1 9 L8.5 1.5 L16 9" />
        </svg>
      </ToTop>
    </Page>
  );
};

export default App;
